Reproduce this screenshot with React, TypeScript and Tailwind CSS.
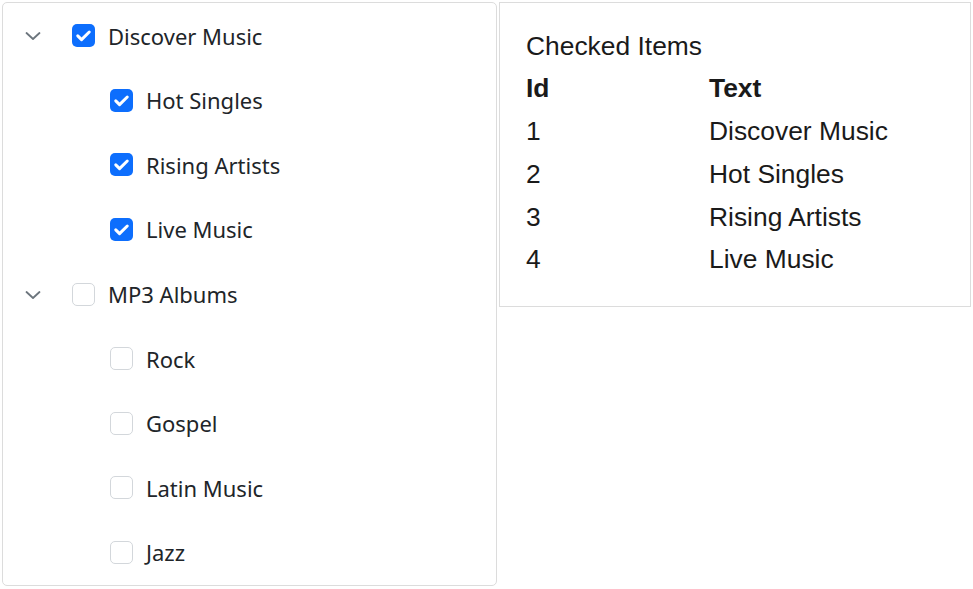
import React from "react";

type Node = { id: number; text: string; checked: boolean; children?: Node[] };

const tree: Node[] = [
  {
    id: 1,
    text: "Discover Music",
    checked: true,
    children: [
      { id: 2, text: "Hot Singles", checked: true },
      { id: 3, text: "Rising Artists", checked: true },
      { id: 4, text: "Live Music", checked: true },
    ],
  },
  {
    id: 5,
    text: "MP3 Albums",
    checked: false,
    children: [
      { id: 6, text: "Rock", checked: false },
      { id: 7, text: "Gospel", checked: false },
      { id: 8, text: "Latin Music", checked: false },
      { id: 9, text: "Jazz", checked: false },
    ],
  },
];

function Box({ checked }: { checked: boolean }) {
  return checked ? (
    <span className="flex h-[23px] w-[23px] shrink-0 items-center justify-center rounded-[5px] bg-[#0d6efd]">
      <svg width="23" height="23" viewBox="0 0 20 20" fill="none">
        <path d="M5 10.3l3.3 3.3L15 7" stroke="#fff" strokeWidth="2.6" strokeLinecap="round" strokeLinejoin="round" />
      </svg>
    </span>
  ) : (
    <span className="h-[23px] w-[23px] shrink-0 rounded-[5px] border border-[#d3d7db] bg-white" />
  );
}

function Chevron() {
  return (
    <svg width="16" height="10" viewBox="0 0 16 10" fill="none">
      <path d="M1.5 2l6.5 6 6.5-6" stroke="#6c757d" strokeWidth="1.8" strokeLinecap="round" strokeLinejoin="round" />
    </svg>
  );
}

export default function App() {
  const rows: { node: Node; level: number }[] = [];
  tree.forEach((n) => {
    rows.push({ node: n, level: 0 });
    n.children?.forEach((c) => rows.push({ node: c, level: 1 }));
  });
  const checkedItems = rows.filter((r) => r.node.checked).map((r) => r.node);

  return (
    <div className="flex items-start gap-[2px] bg-white p-[2px] text-[#212529]">
      <div className="flex h-[584px] w-[495px] flex-col rounded-[5px] border border-[#dcdcdc] py-[0.5px]">
        {rows.map(({ node, level }) => (
          <div key={node.id} className="flex h-[64.6px] items-center">
            <div className="flex w-[69px] shrink-0 justify-start pl-[22px] pt-[1px]">
              {level === 0 && node.children ? <Chevron /> : null}
            </div>
            <div className={level === 1 ? "flex items-center pl-[38px]" : "flex items-center"}>
              <Box checked={node.checked} />
              <span
                className="ml-[13px] text-[22px] leading-none"
                style={{ fontFamily: '"Noto Sans", "Open Sans", sans-serif' }}
              >
                {node.text}
              </span>
            </div>
          </div>
        ))}
      </div>
      <div
        className="w-[472px] border border-[#dcdcdc] pt-[22px] pb-[24px] pl-[26px] text-[26.4px] text-[#1a1a1a]"
        style={{ fontFamily: '"Liberation Sans", Arial, sans-serif' }}
      >
        <div className="flex h-[42.75px] items-center">Checked Items</div>
        <div className="flex h-[42.75px] items-center font-bold">
          <div className="w-[183px]">Id</div>
          <div>Text</div>
        </div>
        {checkedItems.map((n) => (
          <div key={n.id} className="flex h-[42.75px] items-center">
            <div className="w-[183px]">{n.id}</div>
            <div>{n.text}</div>
          </div>
        ))}
      </div>
    </div>
  );
}
